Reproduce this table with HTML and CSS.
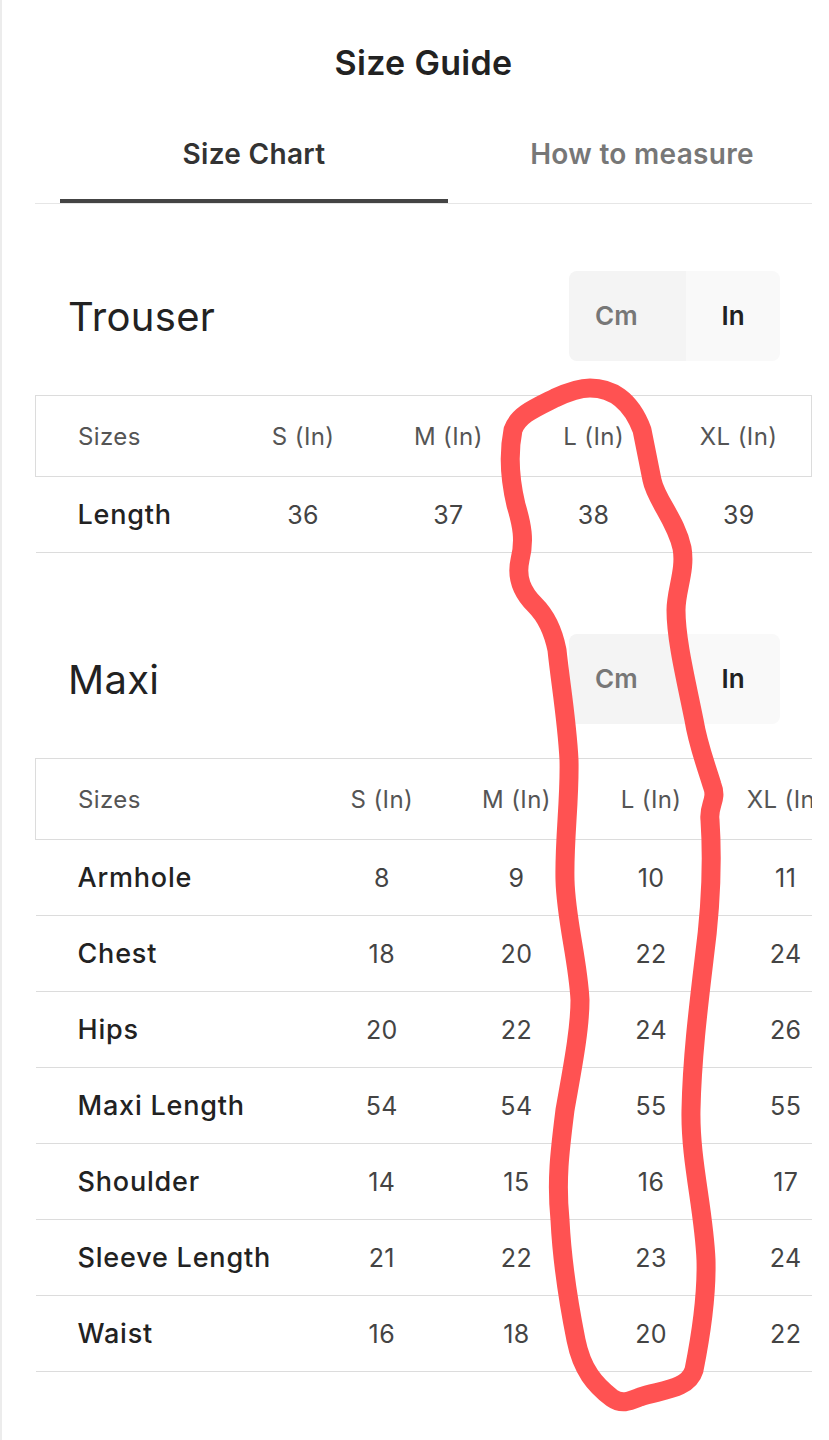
FILE: index.html
```html
<!DOCTYPE html>
<html lang="en">
<head>
    <meta charset="UTF-8">
    <meta name="viewport" content="width=device-width">
    <title>Size Guide</title>
    <link rel="stylesheet" href="styles.css">
</head>

<body>
    <div class="page">
        <h1 class="title">Size Guide</h1>

        <nav class="tabs">
            <div class="tab active">Size Chart</div>
            <div class="tab">How to measure</div>
        </nav>

        <!-- Trouser -->
        <section class="size-section first">
            <div class="section-head">
                <h2>Trouser</h2>
                <div class="unit-toggle">
                    <span class="unit unit-cm">Cm</span>
                    <span class="unit unit-in selected">In</span>
                </div>
            </div>
            <div class="table-wrap">
                <table class="size-table trouser">
                    <thead>
                        <tr>
                            <th>Sizes</th>
                            <th>S (In)</th>
                            <th>M (In)</th>
                            <th>L (In)</th>
                            <th>XL (In)</th>
                        </tr>
                    </thead>
                    <tbody>
                        <tr><td>Length</td><td>36</td><td>37</td><td>38</td><td>39</td></tr>
                    </tbody>
                </table>
            </div>
        </section>

        <!-- Maxi -->
        <section class="size-section">
            <div class="section-head">
                <h2>Maxi</h2>
                <div class="unit-toggle">
                    <span class="unit unit-cm">Cm</span>
                    <span class="unit unit-in selected">In</span>
                </div>
            </div>
            <div class="table-wrap">
                <table class="size-table maxi">
                    <thead>
                        <tr>
                            <th>Sizes</th>
                            <th>S (In)</th>
                            <th>M (In)</th>
                            <th>L (In)</th>
                            <th>XL (In)</th>
                        </tr>
                    </thead>
                    <tbody>
                        <tr><td>Armhole</td><td>8</td><td>9</td><td>10</td><td>11</td></tr>
                        <tr><td>Chest</td><td>18</td><td>20</td><td>22</td><td>24</td></tr>
                        <tr><td>Hips</td><td>20</td><td>22</td><td>24</td><td>26</td></tr>
                        <tr><td>Maxi Length</td><td>54</td><td>54</td><td>55</td><td>55</td></tr>
                        <tr><td>Shoulder</td><td>14</td><td>15</td><td>16</td><td>17</td></tr>
                        <tr><td>Sleeve Length</td><td>21</td><td>22</td><td>23</td><td>24</td></tr>
                        <tr><td>Waist</td><td>16</td><td>18</td><td>20</td><td>22</td></tr>
                    </tbody>
                </table>
            </div>
        </section>
    </div>

    <!-- hand drawn marker round the L column -->
    <svg class="scribble" width="829" height="1440" viewBox="0 0 829 1440">
        <path d="M590 388 C610 388 630 398 642 430 L652 480 C656 500 676 520 682 548 C686 570 676 590 676 610 C676 640 686 680 694 720 C698 745 706 765 712 785 C718 800 708 805 710 820 C712 850 712 900 704 960 C698 1010 692 1060 691 1110 C690 1160 704 1210 706 1260 C707 1300 700 1340 694 1370 C688 1390 660 1390 640 1397 C630 1401 622 1405 612 1398 C595 1385 582 1370 576 1340 C568 1300 562 1260 560 1220 C556 1180 560 1150 565 1110 C572 1070 580 1030 580 1000 C578 960 566 920 565 880 C564 840 570 800 569 760 C567 720 560 680 557 650 C553 630 545 615 535 605 C522 592 516 578 520 560 C525 540 522 525 516 505 C510 480 508 455 513 430 C518 415 535 408 555 398 C568 392 580 388 590 388 Z"/>
    </svg>
</body>
</html>
```

FILE: styles.css
```css
body {
    margin: 0;
    padding: 0;
    position: relative;
    background: #fff;
    font-family: Inter, "Noto Sans", Arial, sans-serif;
    color: #222;
}

.page {
    border-left: 2px solid #ececec;
    padding: 0 17px 0 33px;
    min-height: 1440px;
    box-sizing: border-box;
}

.title {
    margin: 0;
    padding-top: 40px;
    line-height: 46px;
    font-size: 34px;
    font-weight: 600;
    letter-spacing: 0.3px;
    text-align: center;
    color: #222;
}

.tabs {
    display: flex;
    padding-left: 25px;
    border-bottom: 1px solid #e6e6e6;
    overflow: hidden;
}

.tab {
    flex: none;
    width: 388px;
    padding: 51px 0 28px;
    line-height: 34px;
    font-size: 28px;
    font-weight: 600;
    letter-spacing: 0.3px;
    text-align: center;
    color: #777;
    border-bottom: 4px solid transparent;
}

.tab.active {
    color: #333;
    border-bottom-color: #444;
}

.size-section {
    margin-top: 81px;
}

.size-section.first {
    margin-top: 67px;
}

.section-head {
    display: flex;
    justify-content: space-between;
    align-items: center;
    padding: 0 32px 0 33px;
}

.section-head h2 {
    margin: 0;
    font-size: 40px;
    font-weight: 400;
    letter-spacing: 0.3px;
    color: #222;
}

.unit-toggle {
    display: flex;
    border-radius: 8px;
    overflow: hidden;
}

.unit {
    width: 94px;
    line-height: 90px;
    text-align: center;
    font-size: 26px;
    font-weight: 600;
}

.unit-cm {
    width: 91px;
    padding-left: 26px;
    text-align: left;
    background-color: #f4f4f4;
    color: #777;
}

.unit-in {
    background-color: #f9f9f9;
    color: #222;
}

.table-wrap {
    margin-top: 34px;
    overflow: hidden;
}

.size-table {
    border-collapse: collapse;
    table-layout: fixed;
}

.size-table th,
.size-table td {
    padding: 0;
    text-align: center;
    font-size: 25px;
    letter-spacing: 0.4px;
}

.size-table thead tr {
    border: 1px solid #dcdcdc;
}

.size-table th {
    height: 80px;
    font-size: 24px;
    font-weight: 400;
    color: #555;
}

.size-table td {
    height: 75px;
    border-bottom: 1px solid #dcdcdc;
    color: #444;
}

.size-table th:first-child,
.size-table td:first-child {
    text-align: left;
    padding-left: 42px;
}

.size-table td:first-child {
    font-size: 27px;
    font-weight: 500;
    letter-spacing: 0.8px;
    color: #222;
}

.trouser {
    width: 777px;
}

.trouser th:first-child {
    width: 152.5px;
}

.maxi {
    width: 818.5px;
}

.maxi th:first-child {
    width: 236.5px;
}

.scribble {
    position: absolute;
    top: 0;
    left: 0;
    pointer-events: none;
}

.scribble path {
    fill: none;
    stroke: #ff5252;
    stroke-width: 19;
    stroke-linejoin: round;
    stroke-linecap: round;
}
```
